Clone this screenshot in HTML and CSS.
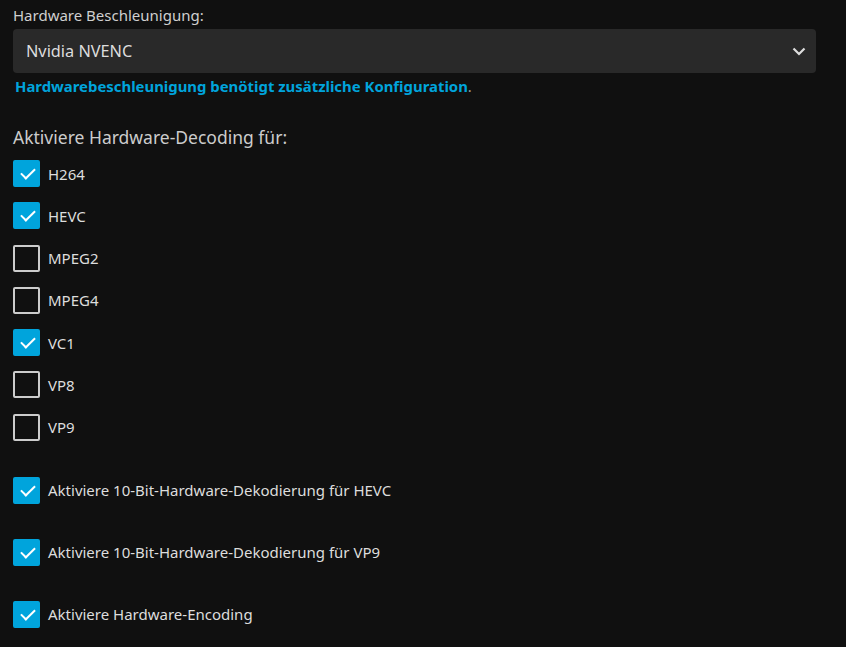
FILE: index.html
```html
<!DOCTYPE html>
<html lang="de">
  <head>
    <meta charset="UTF-8" />
    <title>Transcoding</title>
    <link rel="stylesheet" href="styles.css">
  </head>
  <body>
    <div class="page">
      <div class="select-container">
        <label class="select-label">Hardware Beschleunigung:</label>
        <div class="select-box">
          <span>Nvidia NVENC</span>
          <svg class="chevron" width="14" height="9" viewBox="0 0 14 9">
            <path d="M1.5 1.5 L7 7 L12.5 1.5" fill="none" stroke="#ddd" stroke-width="2.2" />
          </svg>
        </div>
        <div class="field-help">
          <a href="#">Hardwarebeschleunigung benötigt zusätzliche Konfiguration</a>.
        </div>
      </div>

      <h3 class="list-title">Aktiviere Hardware-Decoding für:</h3>

      <div class="checkbox-list">
        <label class="checkbox checked"><span class="box"></span>H264</label>
        <label class="checkbox checked"><span class="box"></span>HEVC</label>
        <label class="checkbox"><span class="box"></span>MPEG2</label>
        <label class="checkbox"><span class="box"></span>MPEG4</label>
        <label class="checkbox checked"><span class="box"></span>VC1</label>
        <label class="checkbox"><span class="box"></span>VP8</label>
        <label class="checkbox"><span class="box"></span>VP9</label>
      </div>

      <div class="option-list">
        <label class="checkbox checked"><span class="box"></span>Aktiviere 10-Bit-Hardware-Dekodierung für HEVC</label>
        <label class="checkbox checked"><span class="box"></span>Aktiviere 10-Bit-Hardware-Dekodierung für VP9</label>
        <label class="checkbox checked"><span class="box"></span>Aktiviere Hardware-Encoding</label>
      </div>
    </div>
  </body>
</html>
```

FILE: styles.css
```css
body {
  margin: 0;
  font-family: "Noto Sans", sans-serif;
  background-color: #101010;
  color: #dddddd;
  height: 100vh;
  overflow: hidden;
}
.page {
  padding: 5px 30px 0 13px;
}
.select-label {
  display: block;
  font-size: 15px;
  line-height: 20px;
  color: #cfcfcf;
  margin-bottom: 4px;
}
.select-box {
  height: 44px;
  background-color: #292929;
  border-radius: 4px;
  display: flex;
  align-items: center;
  justify-content: space-between;
  padding: 0 10px 0 13px;
  font-size: 16.3px;
  color: #dddddd;
}
.chevron {
  display: block;
}
.field-help {
  margin: 3px 0 0 2px;
  font-size: 14.9px;
  line-height: 20px;
  color: #999;
}
.field-help a {
  color: #00a4dc;
  font-weight: bold;
  text-decoration: none;
}
.list-title {
  margin: 29px 0 0;
  font-size: 17.5px;
  font-weight: normal;
  line-height: 24px;
  color: #cccccc;
}
.checkbox-list {
  margin-top: 11px;
  display: flex;
  flex-direction: column;
  gap: 15.3px;
}
.option-list {
  margin-top: 36px;
  display: flex;
  flex-direction: column;
  gap: 35px;
}
.checkbox {
  display: flex;
  align-items: center;
  gap: 8px;
  font-size: 15px;
  color: #dddddd;
  height: 27px;
}
.box {
  width: 27px;
  height: 27px;
  box-sizing: border-box;
  border: 2px solid #cccccc;
  border-radius: 2px;
  position: relative;
  flex: none;
}
.checked .box {
  background-color: #00a4dc;
  border-color: #00a4dc;
}
.checked .box::after {
  content: "";
  position: absolute;
  left: 9px;
  top: 3px;
  width: 6px;
  height: 12px;
  border-right: 2px solid #fff;
  border-bottom: 2px solid #fff;
  transform: rotate(45deg);
}
```
